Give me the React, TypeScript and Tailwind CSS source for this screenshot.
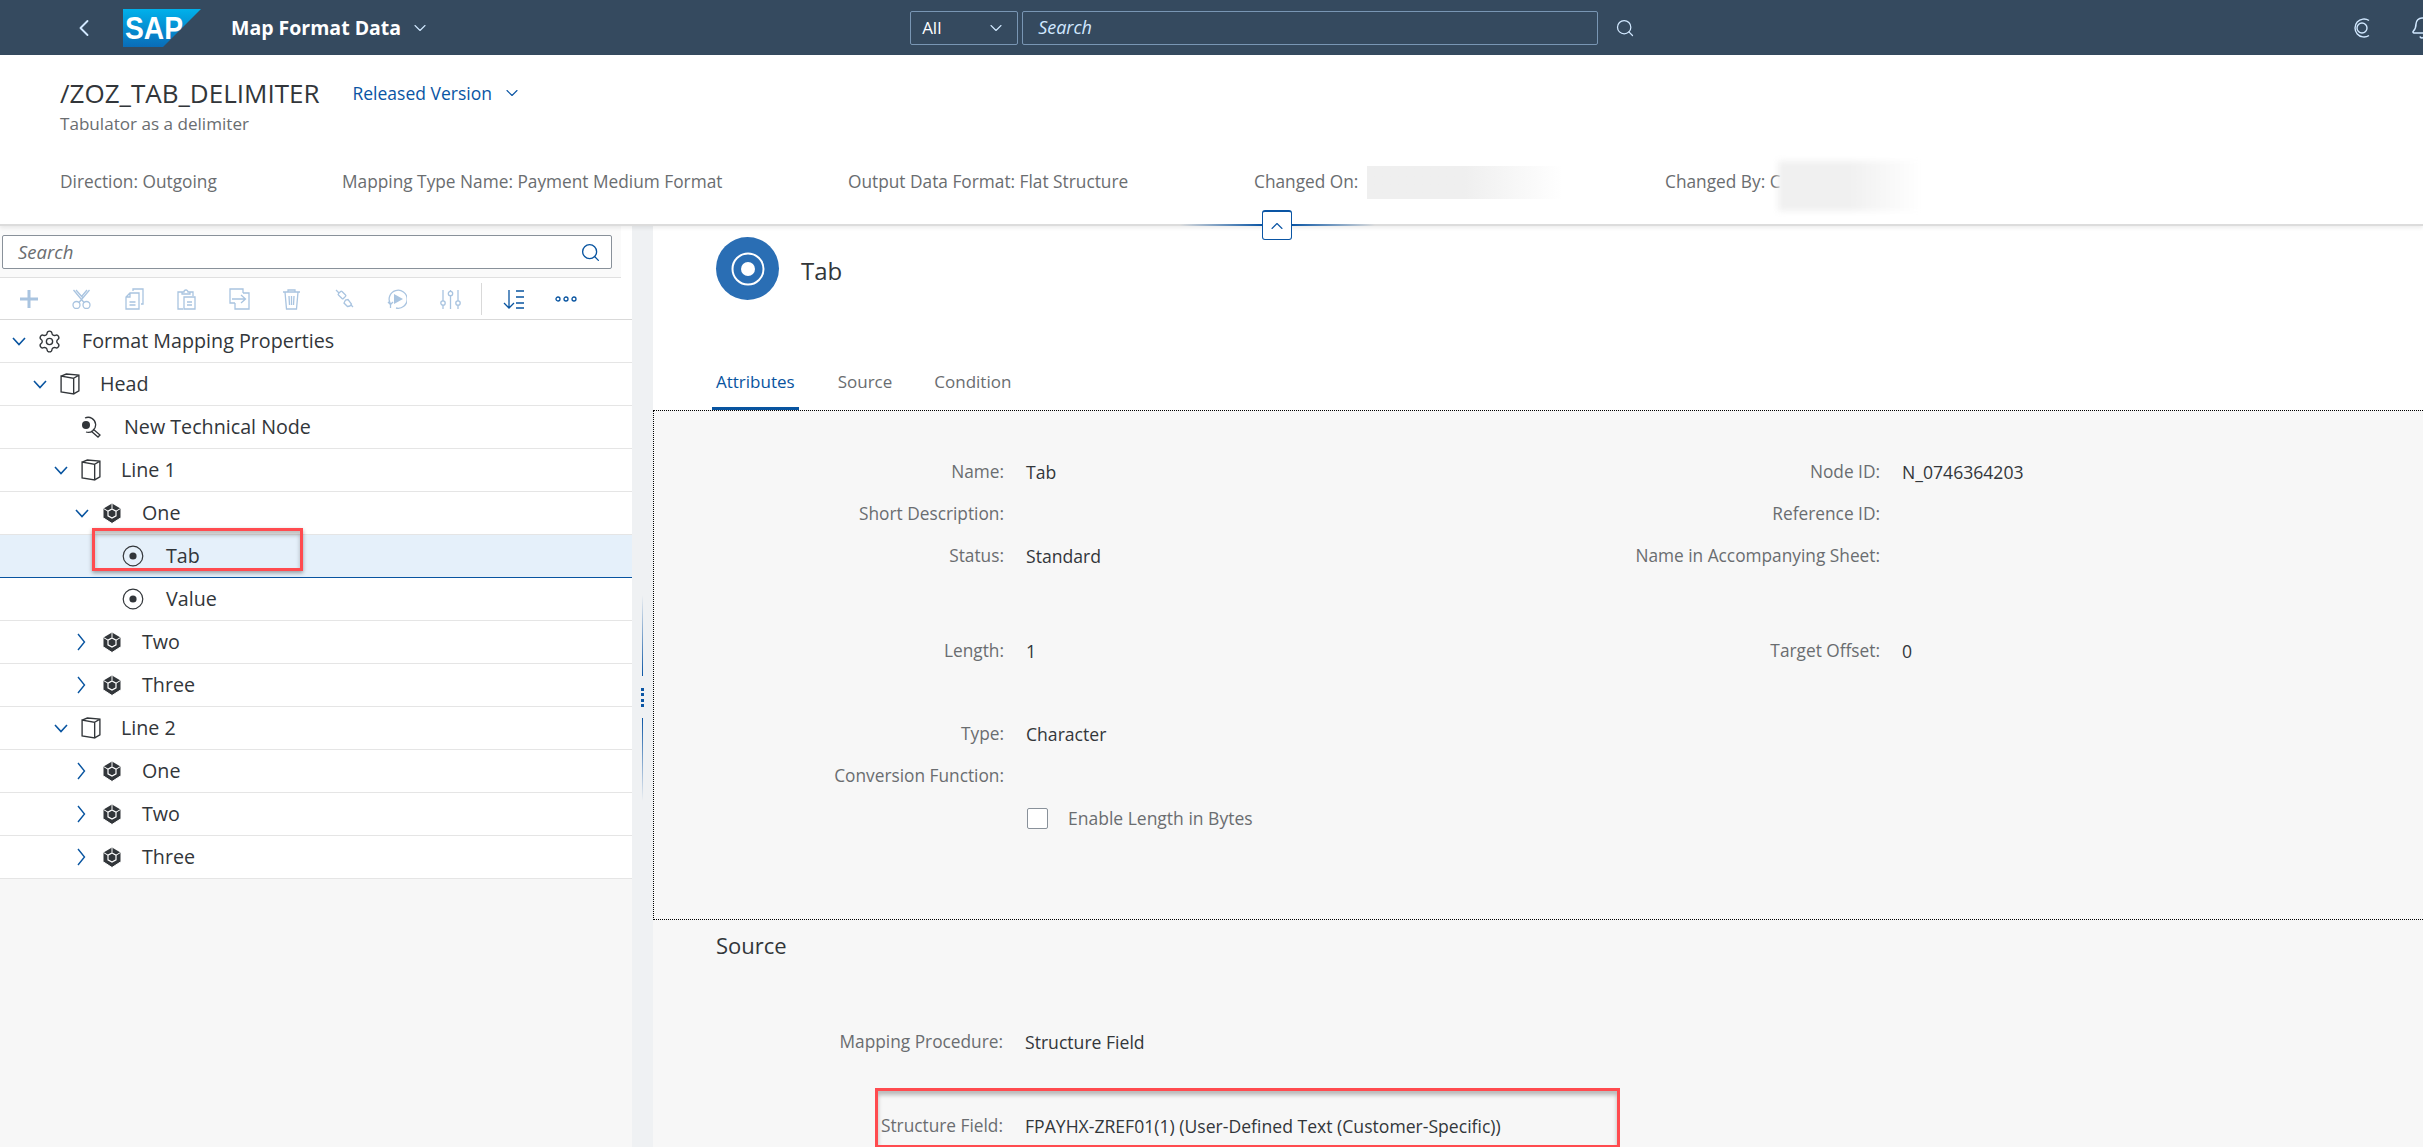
import { Bell, ChevronDown, ChevronLeft, ChevronUp, Search, Settings } from 'lucide-react';
import type { ReactNode } from 'react';

const font = { fontFamily: '"Open Sans", "Liberation Sans", sans-serif' };

function Svg({ w, h, vb, children, className }: { w: number; h: number; vb: string; children: ReactNode; className?: string }) {
  return (
    <svg width={w} height={h} viewBox={vb} fill="none" stroke="currentColor" strokeWidth="1.3" className={className}>
      {children}
    </svg>
  );
}

function SapLogo() {
  return (
    <svg width="78" height="38" viewBox="0 0 78 38">
      <defs>
        <linearGradient id="sapg" x1="0" y1="0" x2="0" y2="1">
          <stop offset="0" stopColor="#00b1eb" />
          <stop offset="1" stopColor="#0a6cb8" />
        </linearGradient>
      </defs>
      <polygon points="0,0 78,0 40,38 0,38" fill="url(#sapg)" />
      <text x="2" y="30" fill="#fff" fontFamily="Liberation Sans" fontWeight="700" fontSize="31" textLength="58" lengthAdjust="spacingAndGlyphs">SAP</text>
    </svg>
  );
}

// toolbar icons, disabled ones are pale blue
const PlusIcon = () => <Svg w={20} h={20} vb="0 0 20 20"><path d="M10 1v18M1 10h18" strokeWidth="3" /></Svg>;
const CutIcon = () => (
  <Svg w={19} h={20} vb="0 0 19 20">
    <circle cx="4.5" cy="16" r="3.5" /><circle cx="14.5" cy="16" r="3.5" />
    <path d="M1.5 1l10.5 12.5M17.5 1L7 13.5M4 1l7 8M15 1l-5 6" />
  </Svg>
);
const CopyIcon = () => (
  <Svg w={19} h={22} vb="0 0 19 22">
    <path d="M5 5h9v16H1V9zM5 5v4H1M4.5 14h6M4.5 17h6M8 3V1h10v15h-2" />
  </Svg>
);
const PasteIcon = () => (
  <Svg w={19} h={22} vb="0 0 19 22">
    <path d="M6 21H1V4h4M13 4h3v4M5 4V6h8V4h-2a2 2 0 0 0-4 0zM7 9h11v12H7zM10 14h5M10 17h5" />
  </Svg>
);
const MoveIcon = () => (
  <Svg w={21} h={22} vb="0 0 21 22">
    <path d="M6 15H1V1h13v4M6 15v6h14V5h-6M3 11h13M12 7l4.5 4-4.5 4" />
  </Svg>
);
const TrashIcon = () => (
  <Svg w={19} h={22} vb="0 0 19 22">
    <path d="M1 4h17M6 4V2h7v2M3 4l1.5 17h10L16 4M7 8l.5 9M9.5 8v9M12 8l-.5 9" />
  </Svg>
);
const PlugIcon = () => (
  <Svg w={19} h={19} vb="0 0 19 19">
    <path d="M1 1l3 3" />
    <rect x="3.5" y="3.5" width="7" height="5" rx="1" transform="rotate(45 7 6)" />
    <path d="M10.5 11l-1.5 3 3.5 3.5c1.5 0 3.5-1 4-2.5L13 10.5zM16 16l2 2" />
  </Svg>
);
const ReplayIcon = () => (
  <Svg w={20} h={20} vb="0 0 20 20">
    <path d="M3.5 15A9 9 0 1 1 9 19M1 13l2.5 2.5L6 13M3.5 15v4" />
    <path d="M7 5l9 5-9 5z" fill="currentColor" stroke="none" />
  </Svg>
);
const SlidersIcon = () => (
  <Svg w={21} h={20} vb="0 0 21 20">
    <path d="M3 1v11M3 16v4M10.5 1v1M10.5 7v13M18 1v11M18 16v4" />
    <circle cx="3" cy="14" r="2.2" /><circle cx="10.5" cy="4.5" r="2.2" /><circle cx="18" cy="14" r="2.2" />
  </Svg>
);
const SortIcon = () => (
  <Svg w={21} h={20} vb="0 0 21 20">
    <path d="M6 1v18M1 14l5 5 5-5M13 2h8M13 8h8M13 14h8M13 19h8" />
  </Svg>
);
const MoreIcon = () => (
  <Svg w={22} h={6} vb="0 0 22 6">
    <circle cx="3" cy="3" r="2" /><circle cx="11" cy="3" r="2" /><circle cx="19" cy="3" r="2" />
  </Svg>
);

const BookIcon = () => (
  <Svg w={20} h={22} vb="0 0 19 21" className="text-[#32363a]">
    <path d="M1 3v15l12 2V5zM1 3l5-2 12 1v15l-5 3M13 5l5-3" />
  </Svg>
);
const TechIcon = () => (
  <Svg w={22} h={22} vb="0 0 22 22" className="text-[#32363a]">
    <path d="M5 2a7.5 7.5 0 1 1 1 14M13 13l7 6-2 2-7-6" />
    <circle cx="6" cy="9" r="4" fill="currentColor" stroke="none" />
  </Svg>
);
const NodeIcon = () => (
  <svg width="20" height="21" viewBox="0 0 20 21">
    <polygon points="10,0.5 18.5,5.5 18.5,15 10,20.5 1.5,15 1.5,5.5" fill="#32363a" />
    <polygon points="10,6 14,8.2 14,12.8 10,15 6,12.8 6,8.2" fill="none" stroke="#fff" strokeWidth="1.2" />
    <path d="M10 .5v5M1.5 5.5L6 8.2M18.5 5.5L14 8.2M1.5 15L10 20.5 18.5 15" stroke="#fff" strokeWidth="1" fill="none" />
  </svg>
);
const RadioIcon = () => (
  <svg width="22" height="22" viewBox="0 0 22 22">
    <circle cx="11" cy="11" r="9.8" fill="none" stroke="#32363a" strokeWidth="1.2" />
    <circle cx="11" cy="11" r="3.6" fill="#32363a" />
  </svg>
);

type TreeRow = { label: string; level: number; open?: boolean; icon: ReactNode; extra?: boolean; selected?: boolean };

const rows: TreeRow[] = [
  { label: 'Format Mapping Properties', level: 0, open: true, icon: <Settings size={25} strokeWidth={1.3} className="text-[#32363a]" />, extra: true },
  { label: 'Head', level: 1, open: true, icon: <BookIcon /> },
  { label: 'New Technical Node', level: 2, icon: <TechIcon />, extra: true },
  { label: 'Line 1', level: 2, open: true, icon: <BookIcon /> },
  { label: 'One', level: 3, open: true, icon: <NodeIcon /> },
  { label: 'Tab', level: 4, icon: <RadioIcon />, extra: true, selected: true },
  { label: 'Value', level: 4, icon: <RadioIcon />, extra: true },
  { label: 'Two', level: 3, open: false, icon: <NodeIcon /> },
  { label: 'Three', level: 3, open: false, icon: <NodeIcon /> },
  { label: 'Line 2', level: 2, open: true, icon: <BookIcon /> },
  { label: 'One', level: 3, open: false, icon: <NodeIcon /> },
  { label: 'Two', level: 3, open: false, icon: <NodeIcon /> },
  { label: 'Three', level: 3, open: false, icon: <NodeIcon /> },
];

function Row({ row }: { row: TreeRow }) {
  return (
    <div
      style={{ paddingLeft: row.level * 21 }}
      className={`flex items-center h-[43px] border-b text-[19.7px] text-[#32363a] ${row.selected ? 'bg-[#e5f0fa] border-[#0854a0]' : 'bg-white border-[#e5e5e5]'}`}
    >
      <span className="w-[36px] flex justify-center shrink-0 text-[#0854a0]">
        {row.open === true && <Svg w={14} h={9} vb="0 0 14 9" className="ml-[1px]"><path d="M1 1l6 6.5L13 1" strokeWidth="1.6" /></Svg>}
        {row.open === false && <Svg w={9} h={18} vb="0 0 9 18"><path d="M1 1l6.5 8L1 17" strokeWidth="1.4" /></Svg>}
      </span>
      <span className="w-[26px] flex justify-center shrink-0">{row.icon}</span>
      <span className={row.extra ? 'ml-[20px]' : 'ml-[17px]'}>{row.label}</span>
    </div>
  );
}

function Field({ label, value }: { label?: string; value?: string }) {
  return (
    <>
      <span className="h-[42px] flex items-center justify-end text-[17.3px] text-[#6a6d70] whitespace-nowrap">{label}</span>
      <span className="h-[42px] flex items-center text-[17.6px] text-[#32363a] whitespace-nowrap">{value}</span>
    </>
  );
}

const gridCols = 'grid grid-cols-[350px_580px_252px_1fr] gap-x-[22px]';

export default function App() {
  return (
    <div style={font} className="w-[2423px] h-[1147px] overflow-hidden flex flex-col bg-white">
      {/* Shell bar */}
      <header className="h-[55px] shrink-0 bg-[#354a5f] flex items-center text-[#d1e8ff]">
        <ChevronLeft size={28} strokeWidth={1.6} className="ml-[70px] shrink-0" />
        <span className="ml-[25px] flex shrink-0"><SapLogo /></span>
        <span className="ml-[30px] text-[19.5px] font-bold text-white whitespace-nowrap shrink-0">Map Format Data</span>
        <ChevronDown size={20} strokeWidth={1.3} className="ml-[9px] shrink-0" />
        <div className="ml-[480px] w-[108px] h-[34px] shrink-0 border border-[#7996b4] rounded-[2px] flex items-center justify-between px-[11px] text-[17px] text-white">
          All
          <ChevronDown size={20} strokeWidth={1.3} className="text-[#d1e8ff]" />
        </div>
        <div className="ml-[4px] w-[576px] h-[34px] shrink-0 border border-[#7996b4] rounded-[2px] flex items-center px-[15px] text-[18px] italic text-[#d1e8ff]">Search</div>
        <Search size={20} strokeWidth={1.5} className="ml-[17px] shrink-0" />
        <svg width="20" height="22" viewBox="0 0 20 22" fill="none" stroke="currentColor" strokeWidth="1.4" className="ml-[717px] shrink-0">
          <path d="M17 3.5A9 9 0 1 0 17 18.5" /><circle cx="10" cy="11" r="5" />
        </svg>
        <Bell size={24} strokeWidth={1.5} className="ml-[38px] shrink-0" />
      </header>

      {/* Object header */}
      <section className="relative h-[171px] shrink-0 bg-white border-b-2 border-[#dcdcdc] shadow-[0_2px_4px_rgba(0,0,0,0.08)] z-10 px-[60px]">
        <div className="flex items-center pt-[20px]">
          <h1 className="text-[26px] leading-[36px] text-[#32363a]">/ZOZ_TAB_DELIMITER</h1>
          <span className="ml-[33px] text-[17.5px] text-[#0a55a4]">Released Version</span>
          <ChevronDown size={20} strokeWidth={1.3} className="ml-[10px] text-[#0a55a4]" />
        </div>
        <p className="text-[17.1px] leading-[20px] mt-[3px] text-[#6a6d70]">Tabulator as a delimiter</p>
        <div className="flex items-center h-[24px] mt-[36px] text-[17.3px] text-[#6a6d70]">
          <span className="w-[282px] shrink-0">Direction: Outgoing</span>
          <span className="w-[506px] shrink-0">Mapping Type Name: Payment Medium Format</span>
          <span className="w-[406px] shrink-0">Output Data Format: Flat Structure</span>
          <span className="w-[411px] shrink-0 flex items-center">
            Changed On:
            <span className="ml-[9px] w-[196px] h-[33px] bg-gradient-to-r from-[#efefef] via-[#efefef] to-white" />
          </span>
          <span className="flex items-center whitespace-nowrap">
            Changed By: C
            <span className="-ml-[3px] mt-[8px] w-[143px] h-[50px] bg-gradient-to-r from-[#f0f0f0] via-[#f0f0f0] to-white blur-[3px]" />
          </span>
        </div>
        <div className="absolute left-[1180px] top-[155px] flex items-center">
          <span className="w-[82px] h-[2px] bg-gradient-to-r from-transparent to-[#0a55a4]" />
          <span className="w-[30px] h-[30px] bg-white border border-[#0a55a4] border-t-2 rounded-[3px] flex items-center justify-center text-[#0a55a4]">
            <ChevronUp size={20} strokeWidth={1.3} />
          </span>
          <span className="w-[83px] h-[2px] bg-gradient-to-l from-transparent to-[#0a55a4]" />
        </div>
      </section>

      <div className="flex flex-1 min-h-0">
        {/* Tree */}
        <aside className="w-[632px] shrink-0 bg-[#f7f7f7]">
          <div className="bg-white">
            <div className="h-[52px] pt-[9px] pl-[2px] bg-[#fafafa] border-b border-[#e0e0e0] mr-[11px]">
              <div className="w-[610px] h-[34px] bg-white border border-[#89919a] rounded-[2px] flex items-center justify-between pl-[15px] pr-[10px]">
                <span className="text-[18.5px] italic text-[#6a6d70]">Search</span>
                <Search size={21} strokeWidth={1.5} className="text-[#0854a0]" />
              </div>
            </div>
            <div className="h-[42px] flex items-center border-b border-[#d9d9d9] relative text-[#a9c4e0]">
              <span className="w-[53px] flex justify-center ml-[2px]"><PlusIcon /></span>
              <span className="w-[53px] flex justify-center"><CutIcon /></span>
              <span className="w-[52px] flex justify-center"><CopyIcon /></span>
              <span className="w-[53px] flex justify-center"><PasteIcon /></span>
              <span className="w-[52px] flex justify-center"><MoveIcon /></span>
              <span className="w-[53px] flex justify-center"><TrashIcon /></span>
              <span className="w-[53px] flex justify-center"><PlugIcon /></span>
              <span className="w-[52px] flex justify-center"><ReplayIcon /></span>
              <span className="w-[54px] flex justify-center"><SlidersIcon /></span>
              <span className="ml-[4px] w-px h-[32px] bg-[#d9d9d9]" />
              <span className="w-[63px] flex justify-center text-[#0854a0]"><SortIcon /></span>
              <span className="w-[41px] flex justify-center text-[#0854a0]"><MoreIcon /></span>
            </div>
          </div>
          <div className="relative">
            {rows.map((row, i) => <Row key={i} row={row} />)}
            {/* red callout around the selected row */}
            <div className="absolute left-[92px] top-[208px] w-[211px] h-[43px] border-[3px] border-[#ff4b4f] shadow-[0_2px_4px_rgba(0,0,0,0.35),inset_0_4px_4px_rgba(0,0,0,0.25)]" />
          </div>
        </aside>

        {/* Splitter */}
        <div className="w-[21px] shrink-0 bg-[#eff1f3] flex flex-col items-center pt-[369px]">
          <span className="w-px h-[81px] bg-gradient-to-b from-transparent to-[#0a55a4]" />
          <span className="mt-[12px] w-[3px] h-[19px] border-l-[3px] border-dotted border-[#0a55a4]" />
          <span className="mt-[11px] w-px h-[83px] bg-gradient-to-t from-transparent to-[#0a55a4]" />
        </div>

        {/* Detail */}
        <main className="flex-1 min-w-0 bg-[#f7f7f7]">
          <div className="bg-white h-[184px] pl-[63px] pt-[11px]">
            <div className="flex items-center">
              <span className="w-[63px] h-[63px] rounded-full bg-[#2a6eb4] flex items-center justify-center">
                <svg width="34" height="34" viewBox="0 0 34 34">
                  <circle cx="17" cy="17" r="15.5" fill="none" stroke="#fff" strokeWidth="2" />
                  <circle cx="17" cy="17" r="7" fill="#fff" />
                </svg>
              </span>
              <span className="ml-[22px] mt-[5px] text-[24px] text-[#32363a]">Tab</span>
            </div>
            <nav className="flex mt-[63px] text-[17px] text-[#6a6d70]">
              <span className="px-[4px] -ml-[4px] h-[47px] pt-[6px] text-[#0854a0] border-b-[3px] border-[#0854a0]">Attributes</span>
              <span className="ml-[39px] pt-[6px]">Source</span>
              <span className="ml-[42px] pt-[6px]">Condition</span>
            </nav>
          </div>
          <div className="h-[510px] border border-r-0 border-dotted border-black pt-[40px]">
            <div className={gridCols}>
              <Field label="Name:" value="Tab" />
              <Field label="Node ID:" value="N_0746364203" />
              <Field label="Short Description:" />
              <Field label="Reference ID:" />
              <Field label="Status:" value="Standard" />
              <Field label="Name in Accompanying Sheet:" />
            </div>
            <div className={`${gridCols} mt-[53px]`}>
              <Field label="Length:" value="1" />
              <Field label="Target Offset:" value="0" />
            </div>
            <div className={`${gridCols} mt-[41px]`}>
              <Field label="Type:" value="Character" />
              <span /><span />
              <Field label="Conversion Function:" />
              <span /><span />
              <span />
              <label className="h-[42px] flex items-center text-[17.5px] text-[#6a6d70] whitespace-nowrap">
                <span className="ml-[1px] w-[21px] h-[21px] border border-[#89919a] rounded-[2px] bg-white" />
                <span className="ml-[20px]">Enable Length in Bytes</span>
              </label>
            </div>
          </div>
          <h2 className="pl-[63px] mt-[10px] text-[22px] leading-[30px] text-[#32363a]">Source</h2>
          <div className={`${gridCols} mt-[61px]`}>
            <Field label="Mapping Procedure:" value="Structure Field" />
            <span /><span />
          </div>
          <div className={`${gridCols} mt-[42px] relative`}>
            <Field label="Structure Field:" value="FPAYHX-ZREF01(1) (User-Defined Text (Customer-Specific))" />
            <div className="absolute left-[222px] top-[-17px] w-[745px] h-[60px] border-[3px] border-[#ff4b4f] shadow-[inset_0_4px_4px_rgba(0,0,0,0.25)]" />
          </div>
        </main>
      </div>
    </div>
  );
}
